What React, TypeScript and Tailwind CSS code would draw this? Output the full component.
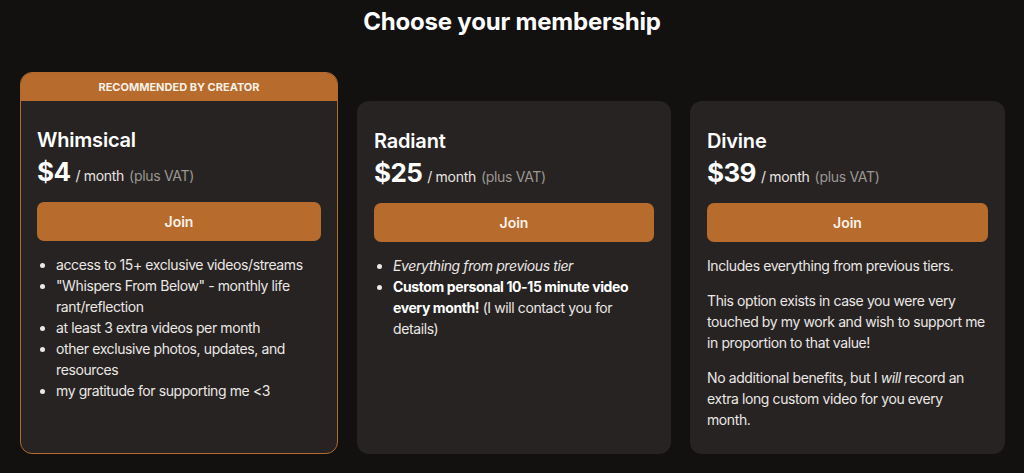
const font = { fontFamily: "Inter, 'Liberation Sans', sans-serif" };

function Price({ amount }: { amount: string }) {
  return (
    <div className="mt-[3px] flex items-baseline leading-[30px] tracking-[-0.3px]">
      <span className="text-[26px] font-bold tracking-[-0.6px] text-white">{amount}</span>
      <span className="ml-[5px] text-[14px] text-[#e8e6e3]">/ month</span>
      <span className="ml-[5px] text-[14px] text-[#9c9793]">(plus VAT)</span>
    </div>
  );
}

function JoinButton() {
  return (
    <button className="mt-[11px] flex h-[39px] w-full items-center justify-center rounded-[7px] bg-[#b76b2d] text-[14px] font-semibold tracking-normal text-[#fbf3ea]">
      Join
    </button>
  );
}

function CardTop({ name, amount }: { name: string; amount: string }) {
  return (
    <>
      <h2 className="text-[20px] font-semibold leading-[28px] tracking-[-0.2px] text-white">{name}</h2>
      <Price amount={amount} />
      <JoinButton />
    </>
  );
}

export default function App() {
  return (
    <div className="min-h-[473px] bg-[#121110] px-5 pt-[6px] text-[#ebe8e5]" style={font}>
      <h1 className="text-center text-[24px] font-bold leading-[32px] tracking-[-0.2px] text-white">
        Choose your membership
      </h1>
      <div className="mt-[63px] grid grid-cols-[318px_314px_315px] gap-[19px] tracking-[-0.4px]">
        <div className="-mt-[29px] flex flex-col overflow-hidden rounded-[12px] border-[1.5px] border-[#b36a2e] bg-[#262322]">
          <div className="flex h-[28px] items-center justify-center bg-[#b76b2d] text-[11px] font-bold tracking-normal text-[#fbf1e6]">
            RECOMMENDED BY CREATOR
          </div>
          <div className="px-4 pb-6 pt-[25px]">
            <CardTop name="Whimsical" amount="$4" />
            <ul className="mt-[13px] list-disc pl-[19px] text-[14px] leading-[21px]">
              <li>access to 15+ exclusive videos/streams</li>
              <li>"Whispers From Below" - monthly life rant/reflection</li>
              <li>at least 3 extra videos per month</li>
              <li>other exclusive photos, updates, and resources</li>
              <li>my gratitude for supporting me &lt;3</li>
            </ul>
          </div>
        </div>

        <div className="rounded-[12px] bg-[#262322] px-[17px] pb-6 pt-[26px]">
          <CardTop name="Radiant" amount="$25" />
          <ul className="mt-[13px] list-disc pl-[19px] text-[14px] leading-[21px]">
            <li className="italic">Everything from previous tier</li>
            <li>
              <strong className="font-bold text-white">Custom personal 10-15 minute video every month!</strong> (I will
              contact you for details)
            </li>
          </ul>
        </div>

        <div className="rounded-[12px] bg-[#262322] px-[17px] pb-6 pt-[26px]">
          <CardTop name="Divine" amount="$39" />
          <div className="mt-[13px] flex flex-col gap-[14px] text-[14px] leading-[21px]">
            <p>Includes everything from previous tiers.</p>
            <p>This option exists in case you were very touched by my work and wish to support me in proportion to that value!</p>
            <p>
              No additional benefits, but I <em>will</em> record an extra long custom video for you every month.
            </p>
          </div>
        </div>
      </div>
    </div>
  );
}
